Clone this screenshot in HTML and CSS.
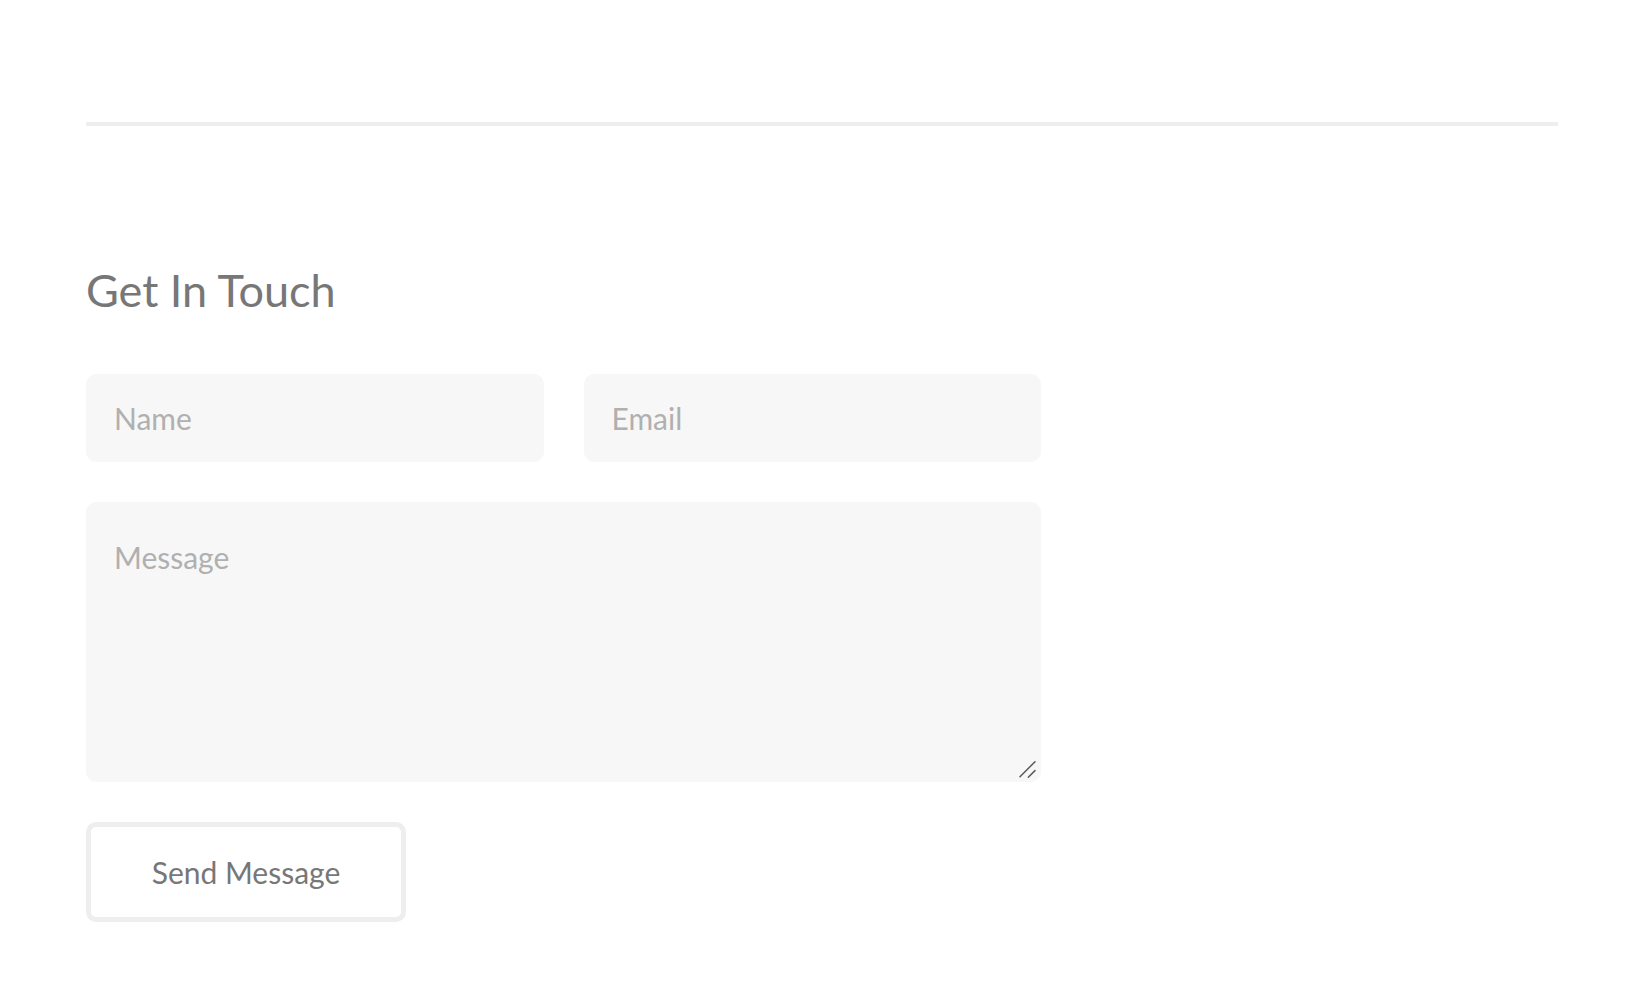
FILE: index.html
```html
<!DOCTYPE html>
<html lang="en">
<head>
  <meta charset="UTF-8">
  <title>Get In Touch</title>
  <meta name="viewport" content="width=device-width, initial-scale=1.0">
  <link rel="stylesheet" href="styles.css">
</head>
<body>
  <main class="page">
    <hr class="divider">

    <section class="contact">
      <h2>Get In Touch</h2>

      <form class="contact-form" onsubmit="return false;">
        <div class="row">
          <input type="text" name="name" placeholder="Name">
          <input type="email" name="email" placeholder="Email">
        </div>
        <div class="message-wrap">
          <textarea name="message" placeholder="Message"></textarea>
          <svg class="grip" width="20" height="20" viewBox="0 0 20 20" aria-hidden="true">
            <line x1="2" y1="16.7" x2="17" y2="1.7" />
            <line x1="10.3" y1="17.3" x2="17" y2="10.6" />
          </svg>
        </div>
        <button type="submit">Send Message</button>
      </form>
    </section>
  </main>
</body>
</html>
```

FILE: styles.css
```css
body {
  margin: 0;
  font-family: 'Lato', 'Open Sans', sans-serif;
  background: #ffffff;
  color: #777777;
}
.page {
  padding: 122px 88px 80px 86px;
}
hr.divider {
  margin: 0;
  border: none;
  height: 4px;
  background: #eeeeee;
}
.contact {
  margin-top: 142px;
  width: 955px;
}
.contact h2 {
  margin: 0 0 61px;
  font-size: 45px;
  line-height: 45px;
  font-weight: 400;
  color: #777777;
}
.contact-form {
  display: flex;
  flex-direction: column;
  gap: 40px;
}
.row {
  display: grid;
  grid-template-columns: 1fr 1fr;
  gap: 40px;
}
input, textarea {
  box-sizing: border-box;
  width: 100%;
  border: none;
  border-radius: 10px;
  background: #f7f7f7;
  color: #777777;
  font-family: inherit;
  font-size: 30px;
  outline: none;
}
input {
  height: 88px;
  padding: 0 28px;
}
.message-wrap {
  position: relative;
}
textarea {
  display: block;
  height: 280px;
  padding: 33px 28px;
  line-height: 45px;
  resize: none;
}
.grip {
  position: absolute;
  right: 3px;
  bottom: 2px;
  pointer-events: none;
}
.grip line {
  stroke: #5a5a5a;
  stroke-width: 1.5;
  stroke-linecap: round;
}
input::placeholder, textarea::placeholder {
  color: #b0b0b0;
}
button {
  box-sizing: border-box;
  width: 320px;
  height: 100px;
  border: 5px solid #eeeeee;
  border-radius: 10px;
  background: #ffffff;
  color: #777777;
  font-family: inherit;
  font-size: 30px;
  cursor: pointer;
}
button:hover {
  background: #f7f7f7;
}
```
